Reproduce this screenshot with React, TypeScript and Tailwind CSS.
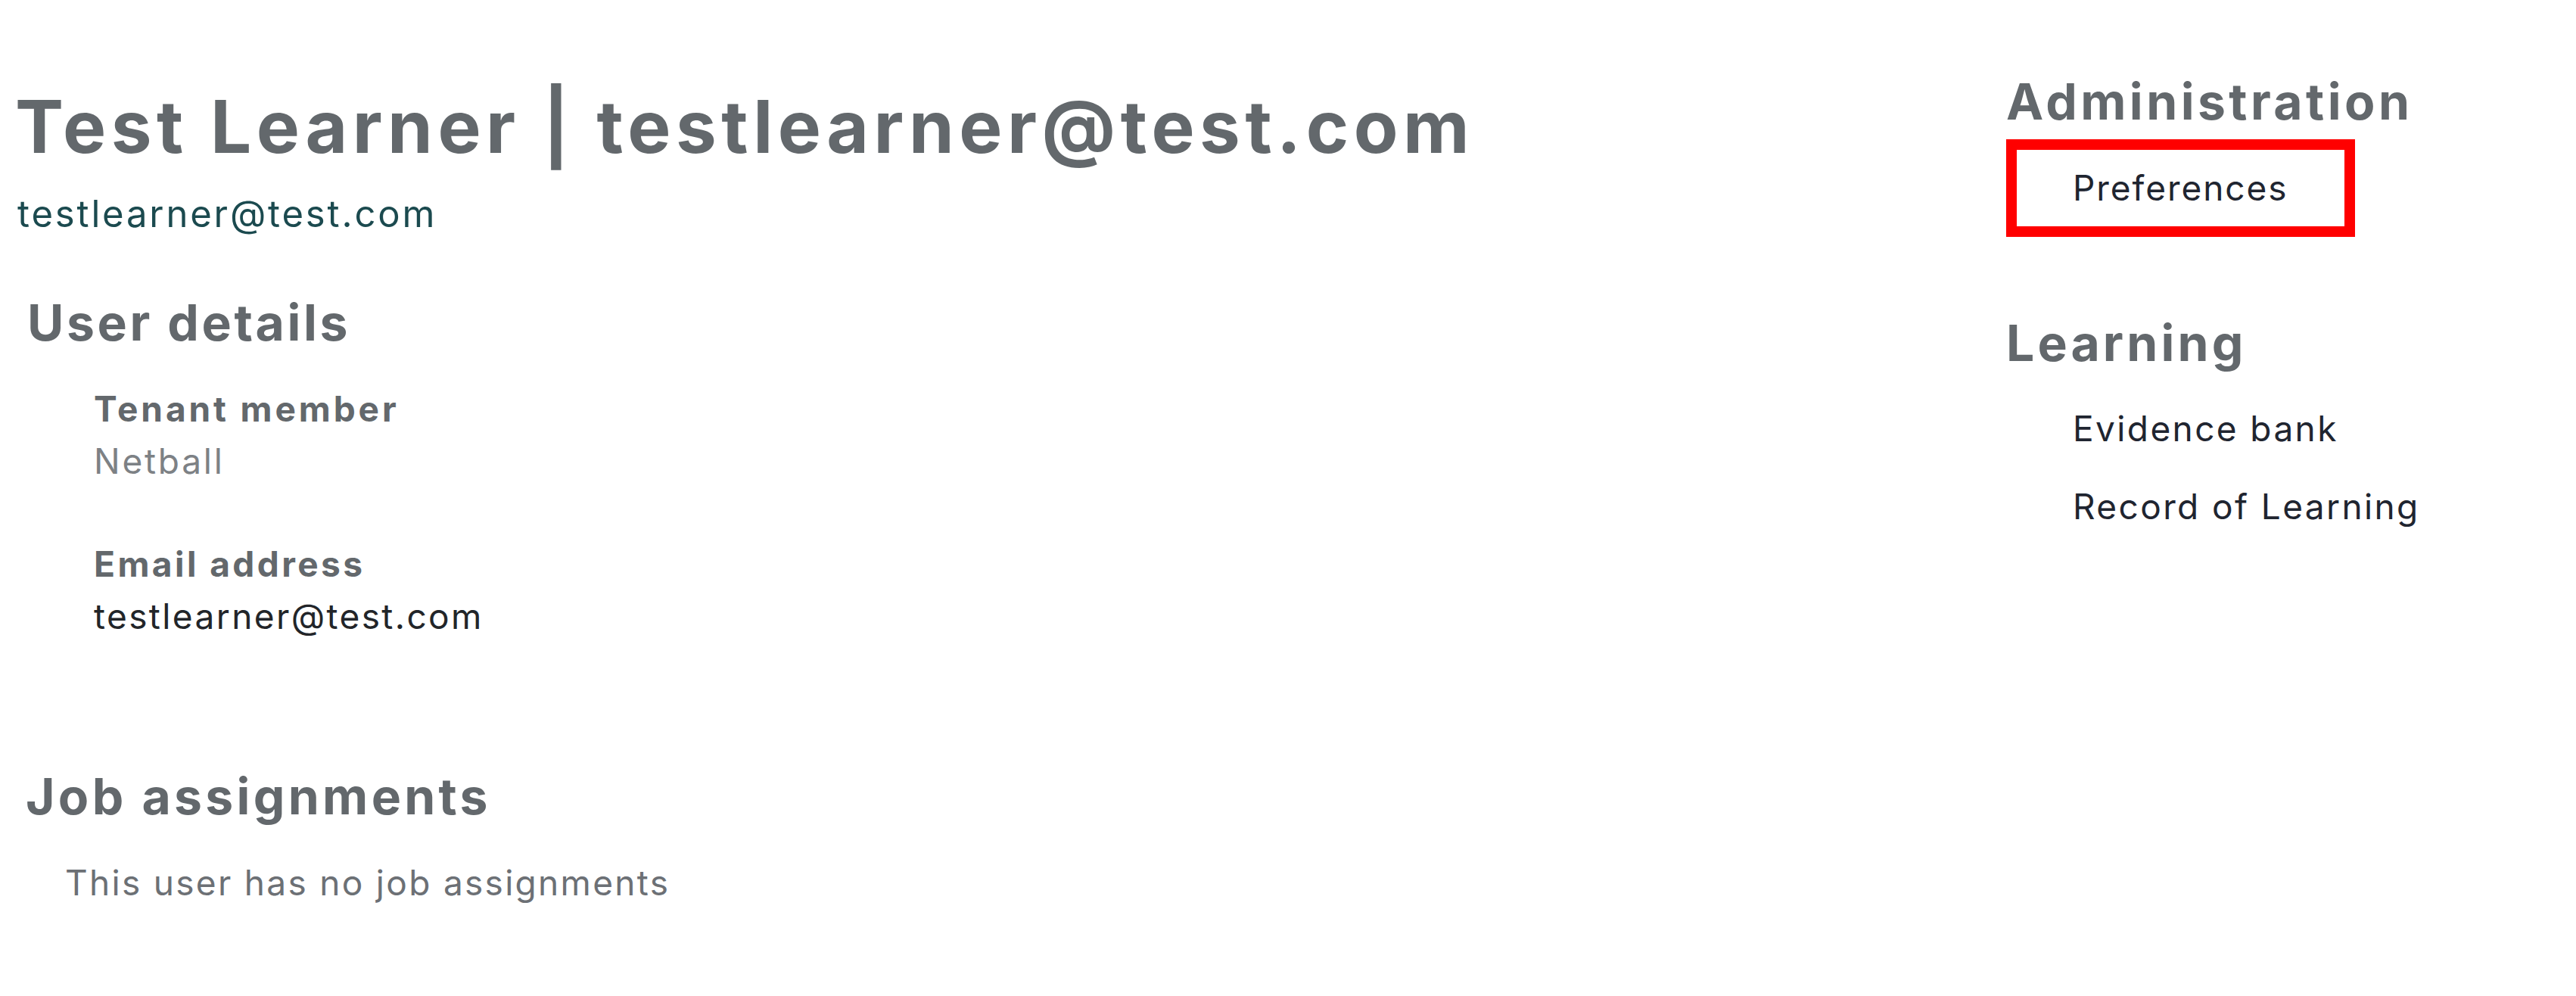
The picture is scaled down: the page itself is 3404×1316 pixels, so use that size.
const detailRows = [
  { label: 'Tenant member', value: 'Netball', muted: true },
  { label: 'Email address', value: 'testlearner@test.com', muted: false },
];

const learningLinks = ['Evidence bank', 'Record of Learning'];

export default function App() {
  return (
    <div className="min-h-screen bg-white flex font-['Inter','Liberation_Sans',sans-serif] text-[#63686c]">
      <main className="flex-1 min-w-0 pl-[20px] pt-[107px]">
        <h1 className="text-[96px] leading-[120px] font-bold tracking-[0.068em] whitespace-nowrap">
          Test Learner | testlearner@test.com
        </h1>
        <p className="mt-[26px] ml-[3px] text-[49px] leading-[60px] text-[#1b4a4f] tracking-[0.058em]">
          testlearner@test.com
        </p>

        <section className="mt-[73px]">
          <h2 className="ml-[16px] text-[66px] leading-[80px] font-bold tracking-[0.055em]">User details</h2>
          <dl className="ml-[104px] mt-[40px] flex flex-col gap-[67px]">
            {detailRows.map((row) => (
              <div key={row.label}>
                <dt
                  className={
                    row.muted
                      ? 'text-[46px] leading-[69px] font-bold tracking-[0.085em]'
                      : 'text-[46px] leading-[69px] font-bold tracking-[0.075em]'
                  }
                >
                  {row.label}
                </dt>
                <dd
                  className={
                    row.muted
                      ? 'text-[46px] leading-[69px] text-[#7d8185] tracking-[0.06em]'
                      : 'text-[46px] leading-[69px] text-[#222529] tracking-[0.052em]'
                  }
                >
                  {row.value}
                </dd>
              </div>
            ))}
          </dl>
        </section>

        <section className="mt-[163px]">
          <h2 className="ml-[14px] text-[66px] leading-[80px] font-bold tracking-[0.065em]">Job assignments</h2>
          <p className="mt-[44px] ml-[66px] text-[46px] leading-[60px] text-[#6c7075] tracking-[0.05em]">
            This user has no job assignments
          </p>
        </section>
      </main>

      <aside className="w-[753px] shrink-0 pt-[94px]">
        <h2 className="text-[66px] leading-[80px] font-bold tracking-[0.067em]">Administration</h2>
        <div className="mt-[10px] w-[461px] border-[14px] border-[#ff0000]">
          <a className="block pl-[74px] text-[46px] leading-[101px] text-[#1f2530] tracking-[0.042em]">Preferences</a>
        </div>

        <h2 className="mt-[100px] text-[66px] leading-[80px] font-bold tracking-[0.062em]">Learning</h2>
        <ul className="mt-[22px]">
          {learningLinks.map((link) => (
            <li key={link}>
              <a className="block pl-[88px] text-[46px] leading-[103px] text-[#1f2530] tracking-[0.052em]">{link}</a>
            </li>
          ))}
        </ul>
      </aside>
    </div>
  );
}
